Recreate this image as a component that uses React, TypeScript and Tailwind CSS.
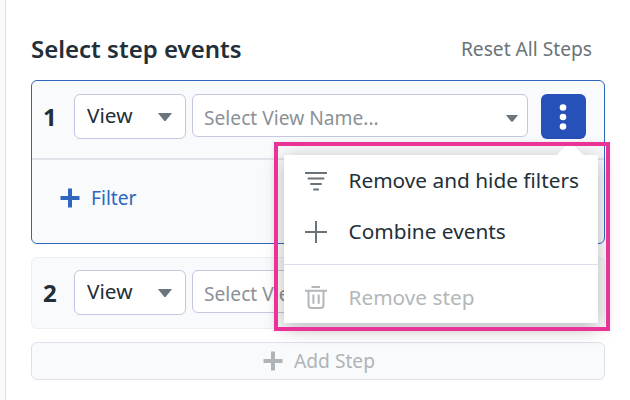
import React from "react";

function Caret({ className }: { className: string }) {
  return (
    <svg viewBox="0 0 14 8" className={className} fill="#6c757b">
      <path d="M.6 0h12.8q.8 0 .3.6L8 7.4q-1 1-2 0L.3.6Q-.2 0 .6 0Z" />
    </svg>
  );
}

function Plus({ className }: { className: string }) {
  return (
    <svg viewBox="0 0 20 20" className={className} stroke="currentColor" strokeWidth="4">
      <path d="M10 .5v19M.5 10h19" />
    </svg>
  );
}

function StepControls({ index }: { index: number }) {
  return (
    <>
      <span className="w-[42px] shrink-0 pl-[11px] pt-[6px] text-[24px] leading-[34px] font-bold text-[#232f38]">
        {index}
      </span>
      <div className="flex h-[45px] w-28 shrink-0 items-center justify-between rounded-md border border-[#c3c7df] bg-white pr-[13px] pl-3">
        <span className="-mt-1 text-[20.8px] leading-7 text-[#232f38]">View</span>
        <Caret className="h-2 w-[14px]" />
      </div>
      <div className="ml-1.5 flex h-[43px] w-[336px] shrink-0 items-center justify-between rounded-md border border-[#c3c7df] bg-white pr-[9px] pl-[11px]">
        <span className="mt-[5px] text-[19.2px] leading-7 text-[#8b9196]">Select View Name...</span>
        <Caret className="mt-[5px] h-[7px] w-3" />
      </div>
    </>
  );
}

function Menu() {
  return (
    <div className="absolute top-[155px] left-[284px] h-[168px] w-[314px] bg-white text-[20.8px] text-[#232f38] shadow-[0_4px_20px_rgba(0,0,0,0.28)]">
      <svg viewBox="0 0 28 15" className="absolute -top-[14px] left-[272px] h-[15px] w-7">
        <path d="M0 15 12.5 1.5q1.5-1.5 3 0L28 15Z" fill="#fff" />
        <path d="M0 14 12.5 1.5q1.5-1.5 3 0L28 14" fill="none" stroke="#e7e8ec" strokeWidth=".8" />
      </svg>
      <div className="flex h-[52px] items-center pl-[21px]">
        <svg viewBox="0 0 22 20" className="h-5 w-[22px]" stroke="#6a7379" strokeWidth="2">
          <path d="M0 2h22M2.7 7.5h16.6M5.3 13h11.4M8.3 18.5h5.6" />
        </svg>
        <span className="mb-0.5 ml-[21.5px] leading-[30px] whitespace-nowrap">Remove and hide filters</span>
      </div>
      <div className="flex h-[57px] items-start pt-[9px] pl-[21px]">
        <svg viewBox="0 0 22 22" className="mt-[5px] size-[22px]" stroke="#6a7379" strokeWidth="2">
          <path d="M11 0v22M0 11h22" />
        </svg>
        <span className="ml-[21.5px] leading-[30px]">Combine events</span>
      </div>
      <div className="flex h-[59px] items-center border-t border-[#dcdeeb] pt-1.5 pl-[21px] text-[#b3b7ba]">
        <svg viewBox="0 0 22 24" className="h-6 w-[22px]" fill="none" stroke="currentColor" strokeWidth="2">
          <path d="M6.5 2h8.5M0 5.8h22M3.5 6v14q0 3 3 3h9q3 0 3-3V6M8.4 9.5v9.3M13.7 9.5v9.3" />
        </svg>
        <span className="mb-px ml-[21.5px] leading-[30px]">Remove step</span>
      </div>
    </div>
  );
}

export default function App() {
  return (
    <div className="relative flex h-[400px] w-[630px] overflow-hidden bg-white font-['Noto_Sans',sans-serif]">
      <aside className="w-1.5 shrink-0 border-r border-[#dfe1ea] bg-[#f9fafc]" />
      <main className="w-[599px] shrink-0 pl-[25px]">
        <header className="flex h-20 items-center justify-between pt-[18px] pr-[13px]">
          <h1 className="text-[24px] font-semibold text-[#232f38]">Select step events</h1>
          <span className="text-[19.2px] text-[#6a7379]">Reset All Steps</span>
        </header>
        <section className="h-[164px] rounded-md border border-[#2e67bd] bg-[#f9fafc]">
          <div className="flex h-[79px] items-start border-b-2 border-[#e2e3eb] pt-[13px]">
            <StepControls index={1} />
            <button className="ml-[13px] flex size-[45px] items-center justify-center rounded-md bg-[#2551b8]">
              <svg viewBox="0 0 8 26" className="-ml-0.5 h-[26px] w-2" fill="white">
                <circle cx="4" cy="3.5" r="3.3" />
                <circle cx="4" cy="13" r="3.3" />
                <circle cx="4" cy="22.5" r="3.3" />
              </svg>
            </button>
          </div>
          <div className="flex h-[76px] items-center pl-7 text-[#2e67bd]">
            <Plus className="size-5" />
            <span className="ml-[11px] text-[19.2px] leading-7">Filter</span>
          </div>
        </section>
        <section className="mt-[13px] flex h-[72px] items-start rounded-md border border-[#edeef2] bg-[#f9fafc] pt-3">
          <StepControls index={2} />
        </section>
        <button className="mt-[13px] flex h-[38px] w-full items-center justify-center rounded-md border border-[#dfe1ea] bg-[#f9fafc] pl-0.5 text-[#aeb4b7]">
          <Plus className="size-5" />
          <span className="ml-[11px] text-[19.2px]">Add Step</span>
        </button>
      </main>
      <Menu />
      <div className="pointer-events-none absolute top-[142px] left-[274px] h-[189px] w-[336px] border-4 border-[#ea3396] shadow-[0_0_5px_rgba(0,0,0,0.06)]" />
    </div>
  );
}
